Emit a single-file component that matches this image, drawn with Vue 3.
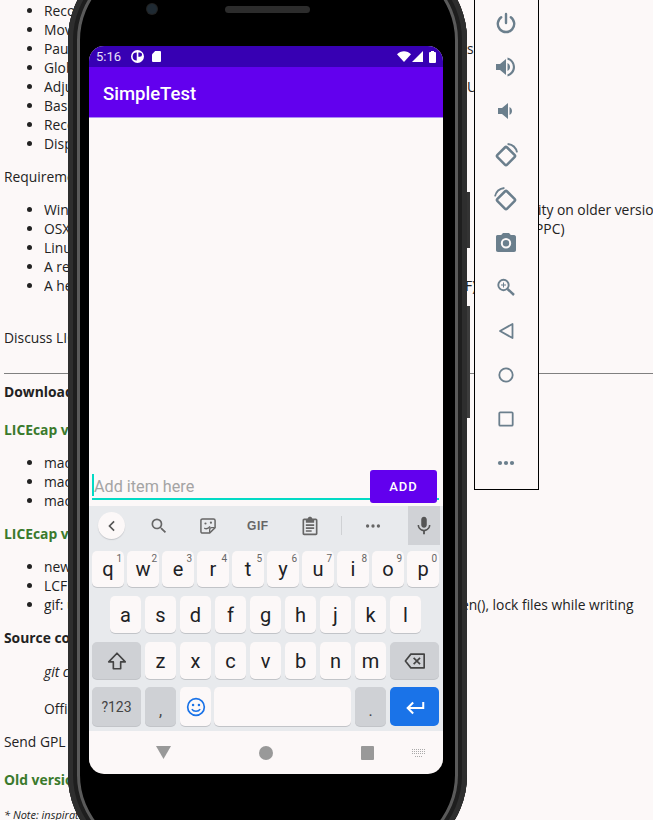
<script setup>
const rowOne = [['q','1'],['w','2'],['e','3'],['r','4'],['t','5'],['y','6'],['u','7'],['i','8'],['o','9'],['p','0']]
const rowTwo = ['a','s','d','f','g','h','j','k','l']
const rowThree = ['z','x','c','v','b','n','m']
</script>

<template>
  <div class="page">
    <main class="doc">
      <ul class="first">
        <li>Record to .GIF or .LCF</li>
        <li>Move the capture window while recording</li>
        <li><span class="lead lead-a">Pause and restart recording, with optional inserted text message</span>s.</li>
        <li>Global hot key to pause and unpause recording</li>
        <li><span class="lead lead-a">Adjustable maximum recording framerate, to help optimize CP</span>U</li>
        <li>Basic title frame and text overlay</li>
        <li>Record mouse button presses</li>
        <li>Display elapsed time</li>
      </ul>
      <p>Requirements:</p>
      <ul>
        <li><span class="lead lead-b">Windows XP/Vista/7/8/10 and later, with limited compatibil</span>ity on older versions</li>
        <li><span class="lead lead-e">OSX 10.4 or later, on either Intel or older machines (</span>PPC)</li>
        <li>Linux through a compatibility layer</li>
        <li>A reasonably fast processor</li>
        <li><span class="lead lead-c">A healthy amount of free disk space for recording (GIF or LC</span>F)</li>
      </ul>
      <p class="discuss">Discuss LICEcap on the forum</p>
      <hr />
      <p class="top-tight"><b>Download:</b></p>
      <p class="version gap-19">LICEcap v1.32</p>
      <ul>
        <li>macOS installer</li>
        <li>macOS 64-bit build</li>
        <li>macOS 32-bit build</li>
      </ul>
      <p class="version">LICEcap v1.32 changes</p>
      <ul>
        <li>new features and small fixes</li>
        <li>LCF format improvements</li>
        <li><span class="lead lead-d">gif: use a safer way of writing frames, fix calls to fop</span>en(), lock files while writing</li>
      </ul>
      <p><b>Source code:</b></p>
      <p class="indent git"><i>git clone the repository</i></p>
      <p class="indent offi">Official repository</p>
      <p>Send GPL source requests</p>
      <p class="version gap-19">Old versions</p>
      <p class="note"><i>* Note: inspiration for this project</i></p>
    </main>

    <aside class="tools">
      <svg viewBox="0 0 24 24" class="tool"><path d="M12 3v9" fill="none" stroke="currentColor" stroke-width="2.4" stroke-linecap="round"/><path d="M7.2 6.2a8.2 8.2 0 1 0 9.6 0" fill="none" stroke="currentColor" stroke-width="2.4" stroke-linecap="round"/></svg>
      <svg viewBox="0 0 24 24" class="tool"><path fill="currentColor" d="M2 9v6h4l6 5V4L6 9H2zm14 3c0-1.800-1-3.300-2.500-4v8c1.500-.7 2.500-2.200 2.500-4zM13.500 2.500v2.200c3 .9 5.400 3.900 5.400 7.300s-2.400 6.400-5.400 7.300v2.200c4.300-1 7.500-4.800 7.500-9.500s-3.200-8.500-7.500-9.500z"/></svg>
      <svg viewBox="0 0 24 24" class="tool"><path fill="currentColor" d="M18 12c0-1.800-1-3.300-2.500-4v8c1.500-.7 2.500-2.200 2.500-4zM4 9v6h4l6 5V4L8 9H4z"/></svg>
      <svg viewBox="0 0 24 24" class="tool big"><rect x="5.500" y="6.500" width="13" height="13" rx="1.500" transform="rotate(45 12 13)" fill="none" stroke="currentColor" stroke-width="2.400"/><path d="M13.500 1.500c4.500.5 8 3.500 9 8" fill="none" stroke="currentColor" stroke-width="1.800"/></svg>
      <svg viewBox="0 0 24 24" class="tool big"><rect x="5.500" y="6.500" width="13" height="13" rx="1.500" transform="rotate(45 12 13)" fill="none" stroke="currentColor" stroke-width="2.400"/><path d="M10.500 1.500c-4.500.5-8 3.500-9 8" fill="none" stroke="currentColor" stroke-width="1.800"/></svg>
      <svg viewBox="0 0 24 24" class="tool"><path fill="currentColor" d="M9 2 7.200 4H3.500C2.100 4 2 5 2 6v13c0 1 .6 2 2 2h16c1.400 0 2-1 2-2V6c0-1-.6-2-2-2h-3.200L15 2H9zm3 15.500a5.200 5.200 0 1 1 0-10.400 5.200 5.200 0 0 1 0 10.400zm0-2a3.200 3.200 0 1 0 0-6.400 3.200 3.200 0 0 0 0 6.400z"/></svg>
      <svg viewBox="0 0 24 24" class="tool"><circle cx="9.500" cy="10" r="5.200" fill="none" stroke="currentColor" stroke-width="1.900"/><path d="m13.500 14 6.500 6" stroke="currentColor" stroke-width="2.400"/><path d="M9.500 7.500v5M7 10h5" stroke="currentColor" stroke-width="1"/></svg>
      <svg viewBox="0 0 24 24" class="tool"><path d="M18.500 5v14L6 12z" fill="none" stroke="currentColor" stroke-width="1.800" stroke-linejoin="round"/></svg>
      <svg viewBox="0 0 24 24" class="tool"><circle cx="12" cy="12" r="6.700" fill="none" stroke="currentColor" stroke-width="1.800"/></svg>
      <svg viewBox="0 0 24 24" class="tool"><rect x="5.300" y="5.300" width="13.400" height="13.400" rx="1" fill="none" stroke="currentColor" stroke-width="1.800"/></svg>
      <svg viewBox="0 0 24 24" class="tool"><circle cx="6" cy="12" r="2.100" fill="currentColor"/><circle cx="12" cy="12" r="2.100" fill="currentColor"/><circle cx="18" cy="12" r="2.100" fill="currentColor"/></svg>
    </aside>

    <span class="btn-power"></span>
    <span class="btn-volume"></span>
    <section class="phone">
      <span class="camera"></span>
      <span class="speaker"></span>
      <div class="screen">
        <div class="status">
          <span class="time">5:16</span>
          <svg viewBox="0 0 12 12" class="st-circle"><path fill="#fff" fill-rule="evenodd" d="M6 0a6 6 0 1 0 0 12A6 6 0 0 0 6 0zM5.300 2.200v7.600a3.800 3.800 0 0 1 0-7.600zM6.800 2.200h1.400a2 2 0 0 1 0 4H6.800z"/></svg>
          <svg viewBox="0 0 9 11" class="st-sd"><path fill="#fff" d="M3.200 0H8a1 1 0 0 1 1 1v9a1 1 0 0 1-1 1H1a1 1 0 0 1-1-1V3.200z"/></svg>
          <span class="st-space"></span>
          <svg viewBox="0 0 14 11" class="st-wifi"><path fill="#fff" d="M0 3.200C3.800-.8 10.200-.8 14 3.200L7 11z"/></svg>
          <svg viewBox="0 0 11 11" class="st-signal"><path fill="#fff" d="M11 0v11H0z"/></svg>
          <svg viewBox="0 0 7 12" class="st-batt"><path fill="#fff" d="M2 0h3v1h1a1 1 0 0 1 1 1v9a1 1 0 0 1-1 1H1a1 1 0 0 1-1-1V2a1 1 0 0 1 1-1h1z"/></svg>
        </div>
        <header class="appbar">SimpleTest</header>
        <div class="content">
          <div class="entry">
            <div class="field"><span class="caret"></span>Add item here</div>
            <button class="add">ADD</button>
          </div>
        </div>
        <div class="keyboard">
          <div class="suggest">
            <span class="back"><svg viewBox="0 0 24 24"><path d="M14.500 6.500 9 12l5.500 5.500" fill="none" stroke="#555" stroke-width="2"/></svg></span>
            <svg viewBox="0 0 24 24" class="sg sg-search"><path fill="#666" d="M15.500 14h-.79l-.28-.27A6.470 6.470 0 0 0 16 9.500 6.500 6.500 0 1 0 9.500 16c1.610 0 3.090-.59 4.230-1.570l.27.28v.79l5 4.990L20.490 19l-4.990-5zm-6 0C7.010 14 5 11.990 5 9.500S7.010 5 9.500 5 14 7.010 14 9.500 11.990 14 9.500 14z"/></svg>
            <svg viewBox="0 0 24 24" class="sg sg-sticker"><path d="M5.500 3.500h13a2 2 0 0 1 2 2V14l-6.500 6.500H5.500a2 2 0 0 1-2-2v-13a2 2 0 0 1 2-2z" fill="none" stroke="#666" stroke-width="1.800"/><path d="M14 20v-3.500a2.500 2.500 0 0 1 2.500-2.500H20M7.500 14.500c2.500 1.500 5 .5 7-2" fill="none" stroke="#666" stroke-width="1.600"/><circle cx="9" cy="9" r="1.300" fill="#666"/><circle cx="15.500" cy="8" r="1.300" fill="#666"/></svg>
            <span class="gif">GIF</span>
            <svg viewBox="0 0 24 24" class="sg sg-clip"><path fill="#666" d="M19 3h-4.200C14.400 1.800 13.300 1 12 1s-2.400.8-2.800 2H5c-1.100 0-2 .9-2 2v16c0 1.100.9 2 2 2h14c1.100 0 2-.9 2-2V5c0-1.100-.9-2-2-2zm0 18H5V5h2v3h10V5h2v16zM7 10h10v2H7zm0 3.500h10v2H7zm0 3.500h7v2H7z"/></svg>
            <span class="divider"></span>
            <svg viewBox="0 0 24 24" class="sg sg-dots"><circle cx="5.500" cy="12" r="2" fill="#666"/><circle cx="12" cy="12" r="2" fill="#666"/><circle cx="18.500" cy="12" r="2" fill="#666"/></svg>
            <span class="mic"><svg viewBox="0 0 24 24"><path fill="#555" d="M12 14c1.660 0 3-1.340 3-3V5c0-1.660-1.340-3-3-3S9 3.340 9 5v6c0 1.660 1.340 3 3 3zm5.300-3c0 3-2.540 5.100-5.300 5.100S6.700 14 6.700 11H5c0 3.410 2.720 6.230 6 6.720V21h2v-3.280c3.280-.48 6-3.300 6-6.720h-1.700z"/></svg></span>
          </div>
          <div class="row row-one">
            <span v-for="k in rowOne" :key="k[0]" class="key">{{ k[0] }}<sup>{{ k[1] }}</sup></span>
          </div>
          <div class="row row-two">
            <span v-for="k in rowTwo" :key="k" class="key">{{ k }}</span>
          </div>
          <div class="row">
            <span class="key wide alt"><svg viewBox="0 0 24 24"><path d="M12 3.500 3 13h5v7.500h8V13h5z" fill="none" stroke="#444" stroke-width="1.800" stroke-linejoin="round"/></svg></span>
            <span v-for="k in rowThree" :key="k" class="key">{{ k }}</span>
            <span class="key wide alt"><svg viewBox="0 0 24 24" class="svg-back"><path d="M7.500 4.500H22v15H7.500L1.500 12z" fill="none" stroke="#444" stroke-width="1.800" stroke-linejoin="round"/><path d="m10.500 8.500 7 7m0-7-7 7" stroke="#444" stroke-width="1.800"/></svg></span>
          </div>
          <div class="row row-four">
            <span class="key wide alt sym">?123</span>
            <span class="key alt punct">,</span>
            <span class="key"><svg viewBox="0 0 24 24" class="svg-emoji"><circle cx="12" cy="12" r="10" fill="none" stroke="#1a73e8" stroke-width="2"/><circle cx="8.500" cy="9.500" r="1.500" fill="#1a73e8"/><circle cx="15.500" cy="9.500" r="1.500" fill="#1a73e8"/><path d="M7 14.500c2 3.500 8 3.500 10 0" fill="none" stroke="#1a73e8" stroke-width="1.800"/></svg></span>
            <span class="key space"></span>
            <span class="key alt punct">.</span>
            <span class="key wide enter"><svg viewBox="0 0 24 24"><path d="M21 6.500V13H4.500M10 7l-6 6 6 6" fill="none" stroke="#fff" stroke-width="2.200"/></svg></span>
          </div>
        </div>
        <nav class="nav">
          <svg viewBox="0 0 15 13" class="nav-back"><path fill="#999" d="M0 0h15L7.500 13z"/></svg>
          <span class="nav-home"></span>
          <span class="nav-recent"></span>
          <svg viewBox="0 0 14 8" class="nav-kbd"><path stroke="#aaa" stroke-width="1" stroke-dasharray="1 1" d="M0 .5h14M0 2.500h14M0 4.500h14M3 7.500h8"/></svg>
        </nav>
      </div>
    </section>
  </div>
</template>

<style scoped>
.page {
  position: relative;
  width: 653px;
  height: 820px;
  overflow: hidden;
  background: #fcf8f8;
}
.doc {
  padding: 1px 0 0 4px;
  font: 13.850px/19px "Open Sans", sans-serif;
  color: #222;
  white-space: nowrap;
}
.doc ul { margin: 14px 0; padding-left: 40px; }
.doc ul.first { margin-top: 0; }
.doc p { margin: 14px 0; }
.doc hr { margin: 26px 0 8px; border: 0; height: 1px; background: #808080; }
.doc .discuss { margin-top: 33px; }
.doc .top-tight { margin-top: 0; }
.doc .version { color: #3a7a2c; font-weight: 700; }
.doc .gap-19 { margin-top: 19px; }
.doc .indent { margin-left: 40px; }
.doc .git { margin-top: 15px; }
.doc .offi { margin-top: 18px; }
.doc .note { margin-top: 16px; font-size: 11px; }
.lead {
  display: inline-block;
  overflow: hidden;
  vertical-align: bottom;
}
.lead-a { width: 423px; }
.lead-b { width: 494px; }
.lead-c { width: 421px; }
.lead-d { width: 417px; }
.lead-e { width: 491px; }

.tools {
  position: absolute;
  left: 474px;
  top: -2px;
  box-sizing: border-box;
  width: 65px;
  height: 492px;
  border: 1px solid #000;
  background: #fcf8f8;
  display: flex;
  flex-direction: column;
  align-items: center;
  gap: 20px;
  padding: 12px 1px 0 0;
  color: #6b7f8d;
}
.tool { width: 24px; height: 24px; flex: none; }
.tool.big { transform: scale(1.05); }

.btn-power,
.btn-volume {
  position: absolute;
  left: 467px;
  width: 3px;
  background: #333;
}
.btn-power { top: 192px; height: 56px; }
.btn-volume { top: 306px; height: 112px; background: #3c3c3c; }

.phone {
  position: absolute;
  left: 68px;
  top: -48px;
  box-sizing: border-box;
  width: 399px;
  height: 911px;
  padding: 94px 0 0 21px;
  border-radius: 88px;
  background: #000;
  box-shadow: inset 0 0 0 5px #2e2e2e, inset 0 0 0 9px #1e1e1e, inset 0 0 0 12px #5a5a5a;
}
.camera {
  position: absolute;
  left: 79px;
  top: 52px;
  width: 10px;
  height: 10px;
  border-radius: 50%;
  background: #1f2a33;
  box-shadow: 0 0 0 1px #222;
}
.speaker {
  position: absolute;
  left: 157px;
  top: 54px;
  width: 85px;
  height: 7px;
  border-radius: 4px;
  background: #2c2c2c;
}
.screen {
  width: 354px;
  height: 728px;
  border-radius: 15px;
  overflow: hidden;
  background: #fcf8f8;
  display: flex;
  flex-direction: column;
  font-family: Roboto, sans-serif;
}
.status {
  height: 21px;
  flex: none;
  background: #3700b3;
  display: flex;
  align-items: center;
  padding: 0 7px;
  color: #e8e0f8;
  font-size: 13px;
}
.time { width: 35px; }
.st-circle { width: 13px; height: 13px; }
.st-sd { width: 9px; height: 11px; margin-left: 8px; }
.st-space { flex: 1; }
.st-wifi { width: 14px; height: 11px; }
.st-signal { width: 11px; height: 11px; margin-left: 1px; }
.st-batt { width: 7px; height: 12px; margin-left: 6px; }
.appbar {
  height: 50px;
  flex: none;
  box-sizing: border-box;
  background: #6200ee;
  color: #fff;
  font-size: 18.500px;
  font-weight: 500;
  line-height: 54px;
  padding-left: 14px;
  box-shadow: 0 1px 0 #a88cf2;
}
.content {
  flex: 1;
  display: flex;
  flex-direction: column;
  justify-content: flex-end;
  padding: 0 4px 3px 3px;
}
.entry { display: flex; align-items: flex-start; height: 33px; }
.field {
  flex: 1;
  box-sizing: border-box;
  height: 30px;
  border-bottom: 2px solid #03dac5;
  font-size: 16.200px;
  line-height: 33px;
  color: #a4a4a4;
  display: flex;
  align-items: flex-start;
}
.caret {
  width: 2px;
  height: 22px;
  margin: 4px 0 0;
  background: #03dac5;
}
.add {
  flex: none;
  width: 67px;
  height: 33px;
  margin: 0 2px 0 -69px;
  padding: 0;
  border: 0;
  border-radius: 3px;
  background: #6200ee;
  color: #fff;
  font: 500 13px Roboto, sans-serif;
  letter-spacing: 1px;
  position: relative;
}
.keyboard {
  flex: none;
  height: 225px;
  box-sizing: border-box;
  background: #e8eaed;
  padding: 0 4px 0 3px;
}
.suggest { position: relative; height: 39px; display: flex; align-items: center; }
.back {
  width: 27px;
  height: 27px;
  margin-left: 6px;
  border-radius: 50%;
  background: #fcf8f8;
  box-shadow: 0 1px 1px #c4c6ca;
  display: flex;
  align-items: center;
  justify-content: center;
}
.back svg { width: 20px; height: 20px; }
.sg { width: 20px; height: 20px; flex: none; }
.sg-search { margin-left: 24px; }
.sg-sticker { margin-left: 29px; }
.gif {
  width: 24px;
  margin-left: 29px;
  font: 700 12px "Liberation Sans", sans-serif;
  letter-spacing: .6px;
  color: #666;
}
.sg-clip { margin-left: 29px; }
.divider { width: 1px; height: 19px; margin-left: 21px; background: #cfd1d4; }
.sg-dots { margin-left: 21px; }
.mic {
  position: absolute;
  right: -1px;
  top: 0;
  width: 32px;
  height: 39px;
  background: #d0d2d6;
  display: flex;
  align-items: center;
  justify-content: center;
}
.mic svg { width: 22px; height: 22px; }
.row {
  display: flex;
  gap: 4px;
  height: 37px;
  margin-top: 9px;
}
.row-one { gap: 3px; height: 36px; margin-top: 6px; }
.row-two { padding-left: 18px; }
.row-four { height: 39px; margin-top: 8px; }
.key {
  position: relative;
  flex: none;
  width: 31px;
  border-radius: 5px;
  background: #fcf8f8;
  box-shadow: 0 1px 0 #c2c4c8;
  display: flex;
  align-items: center;
  justify-content: center;
  font-size: 20px;
  color: #202124;
}
.row-one .key { width: 32px; }
.key sup {
  position: absolute;
  top: 2px;
  right: 2px;
  font-size: 10px;
  line-height: 12px;
  color: #666;
}
.wide { width: 49px; }
.wide svg { width: 22px; height: 22px; }
.wide .svg-back { width: 24px; }
.alt { background: #cfd1d5; }
.sym { font-size: 14px; color: #444; }
.punct { font-size: 16px; padding-top: 8px; box-sizing: border-box; color: #444; }
.space { flex: 1; margin-left: -1px; }
.enter { background: #1a73e8; box-shadow: none; }
.svg-emoji { width: 20px; height: 20px; }
.nav {
  flex: none;
  height: 43px;
  display: flex;
  align-items: center;
}
.nav-back { width: 15px; height: 13px; margin-left: 67px; flex: none; }
.nav-home { width: 14px; height: 14px; margin-left: 88px; border-radius: 50%; background: #999; flex: none; }
.nav-recent { width: 13px; height: 14px; margin-left: 88px; border-radius: 1px; background: #999; flex: none; }
.nav-kbd { width: 14px; height: 8px; margin-left: 38px; flex: none; }
</style>

<style>
html, body { margin: 0; overflow: hidden; }
</style>
